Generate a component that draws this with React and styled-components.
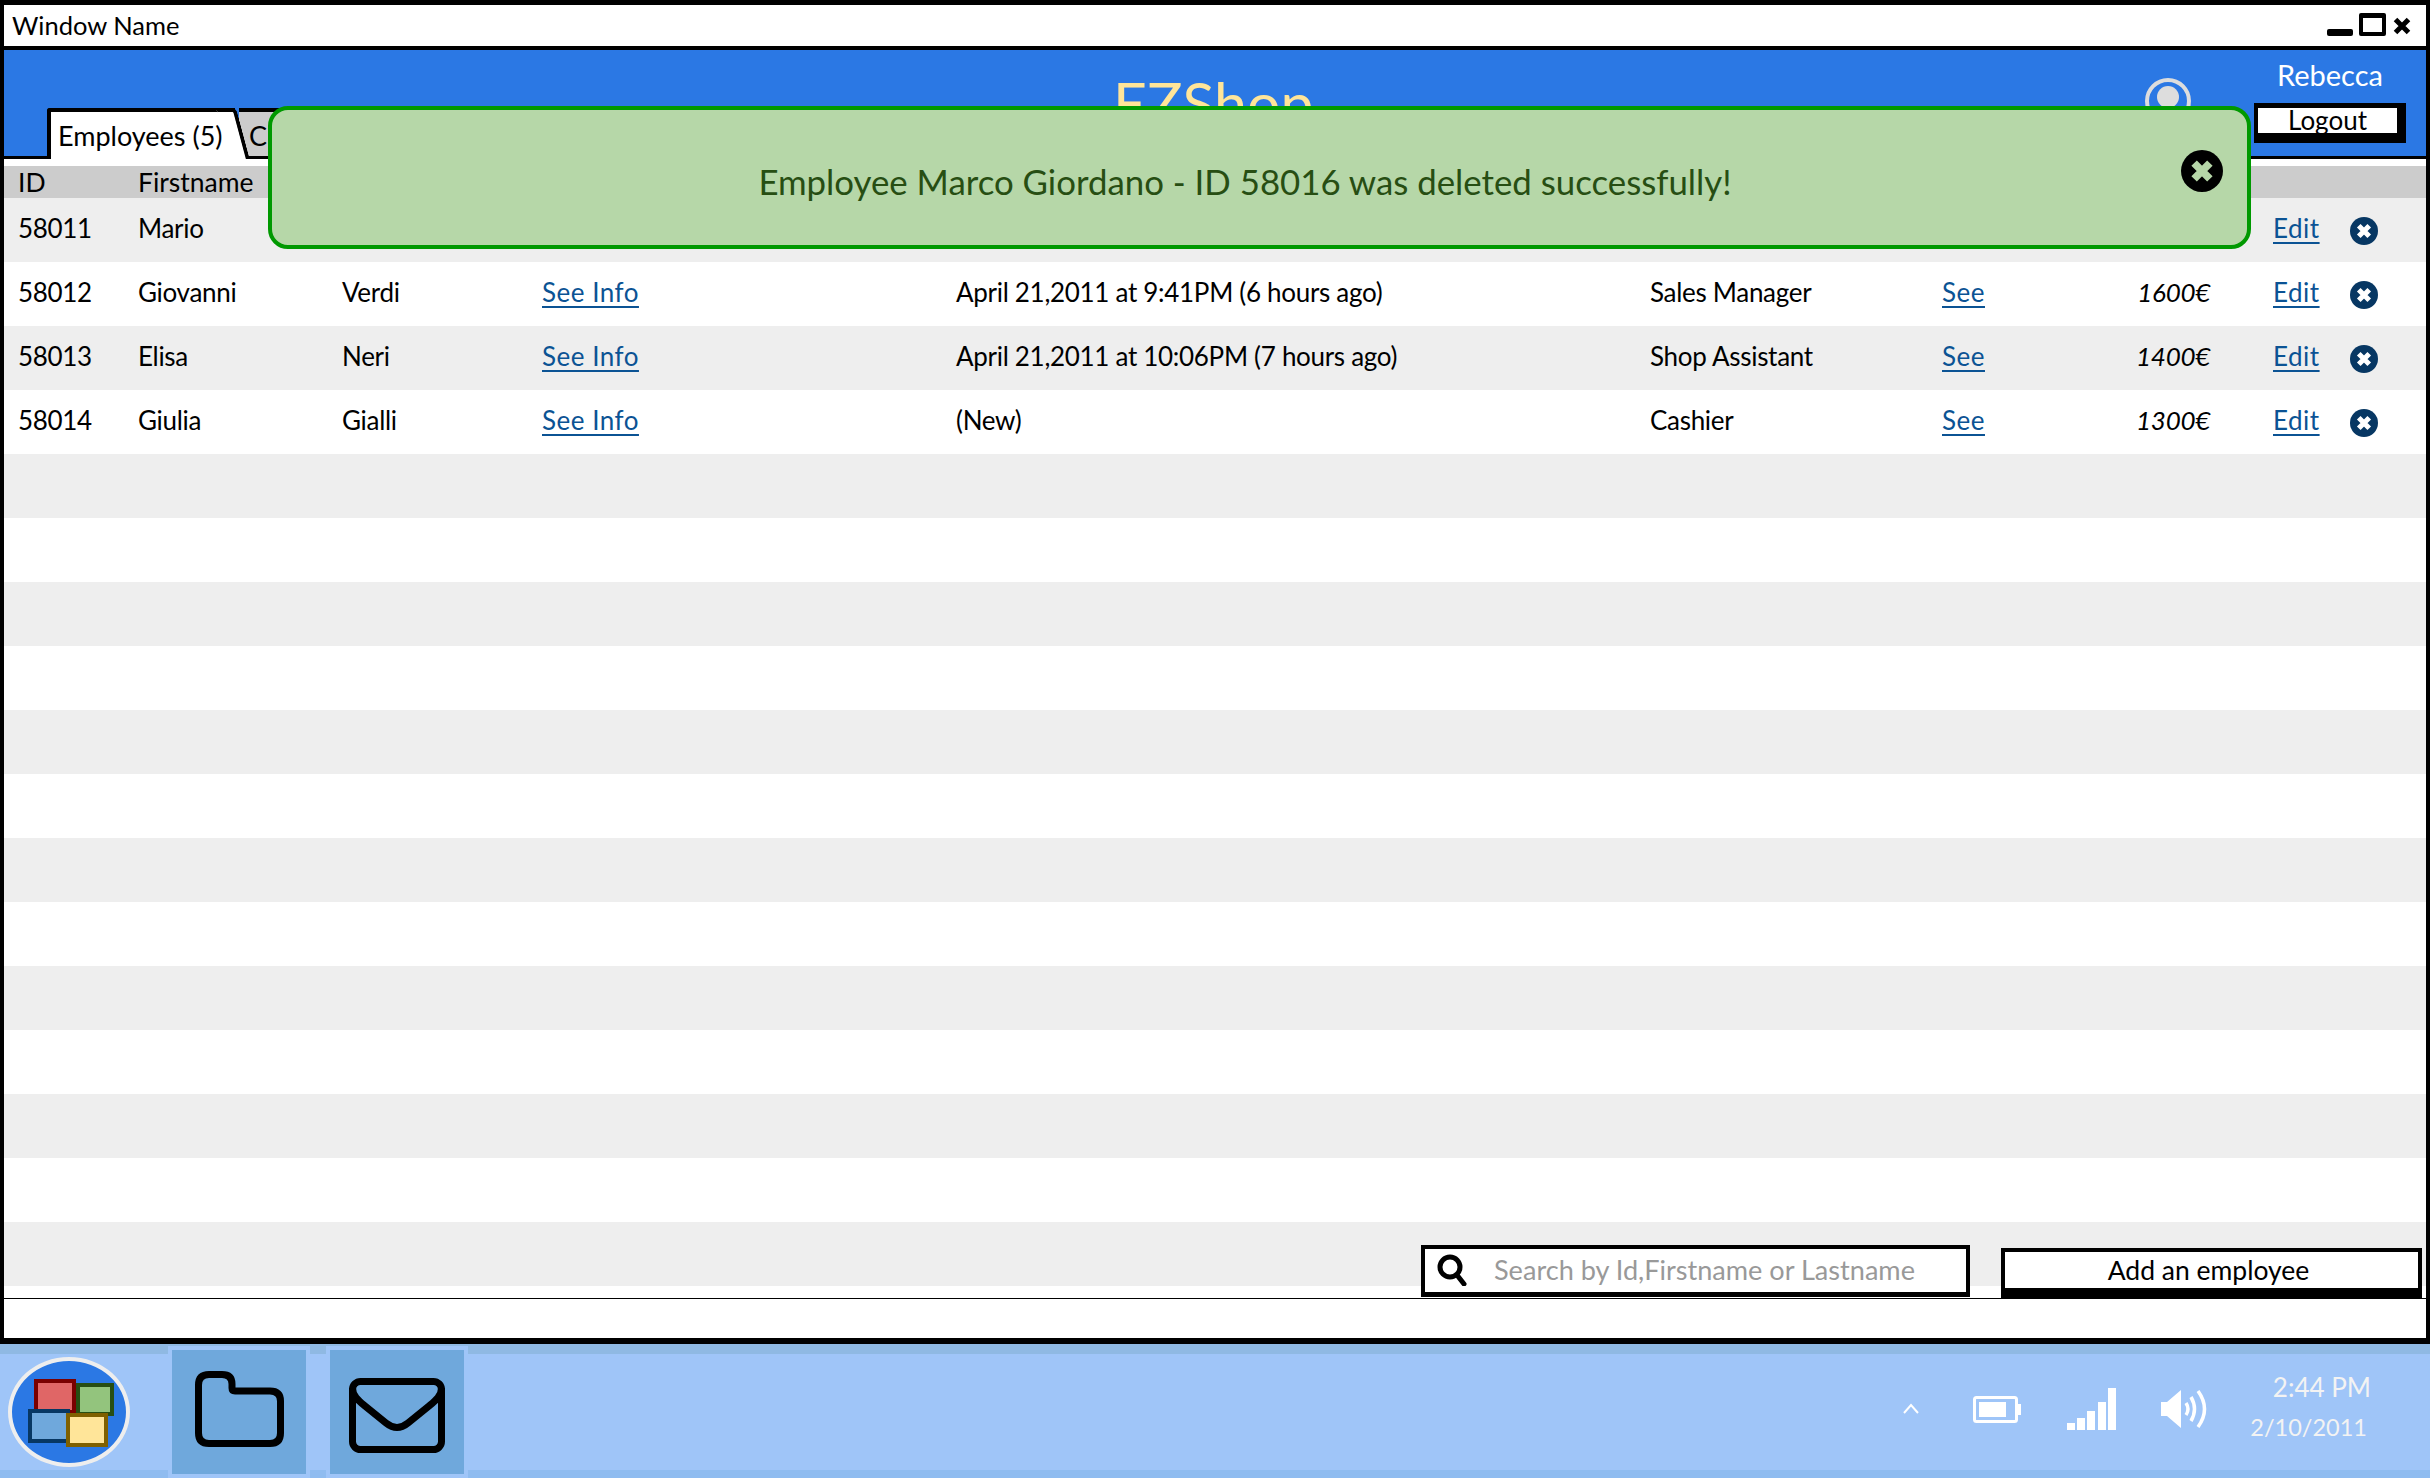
import styled, { createGlobalStyle } from "styled-components"

const GlobalStyle = createGlobalStyle`
    * {
        box-sizing: border-box;
    }
    html, body {
        margin: 0;
        padding: 0;
        background: #FFFFFF;
        font-family: "Lato", "Open Sans", sans-serif;
    }
`

const employees = [
    { id: "58011", first: "Mario", edit: true },
    { id: "58012", first: "Giovanni", last: "Verdi", info: true, login: "April 21,2011 at 9:41PM (6 hours ago)", role: "Sales Manager", salary: "1600€", edit: true },
    { id: "58013", first: "Elisa", last: "Neri", info: true, login: "April 21,2011 at 10:06PM (7 hours ago)", role: "Shop Assistant", salary: "1400€", edit: true },
    { id: "58014", first: "Giulia", last: "Gialli", info: true, login: "(New)", role: "Cashier", salary: "1300€", edit: true },
    ...Array.from({ length: 13 }, () => ({})),
]

function CloseCircle({ size, color, cross }) {
    return (
        <svg width={size} height={size} viewBox="0 0 24 24">
            <circle cx="12" cy="12" r="12" fill={color} />
            <path d="M7.5 7.5L16.5 16.5M16.5 7.5L7.5 16.5" stroke={cross} strokeWidth="4.4" />
        </svg>
    )
}

export default function App() {
    return (
        <Page>
            <GlobalStyle />
            <Window>
                <TitleBar>
                    <WindowName>Window Name</WindowName>
                    <WindowControls>
                        <MinimizeBtn />
                        <MaximizeBtn />
                        <svg width="18" height="18" viewBox="0 0 18 18">
                            <path d="M2.5 2.5L15.5 15.5M15.5 2.5L2.5 15.5" stroke="#000" strokeWidth="5" />
                        </svg>
                    </WindowControls>
                </TitleBar>

                <Header>
                    <Tabs>
                        <Tab>Employees (5)</Tab>
                        <TabBehind>C</TabBehind>
                    </Tabs>
                    <AppTitle>EZShop</AppTitle>
                    <Avatar>
                        <svg width="46" height="46" viewBox="0 0 46 46">
                            <circle cx="23" cy="23" r="21" fill="none" stroke="#DDDDDD" strokeWidth="4" />
                            <circle cx="23" cy="19" r="11" fill="#DDDDDD" />
                        </svg>
                    </Avatar>
                    <UserBlock>
                        <UserName>Rebecca</UserName>
                        <LogoutButton>Logout</LogoutButton>
                    </UserBlock>
                </Header>

                <Table>
                    <HeadRow>
                        <span>ID</span>
                        <span>Firstname</span>
                    </HeadRow>
                    {employees.map((emp, i) => (
                        <Row key={i} $alt={i % 2 === 0}>
                            <span>{emp.id}</span>
                            <span>{emp.first}</span>
                            <span>{emp.last}</span>
                            <span>{emp.info && <LinkText>See Info</LinkText>}</span>
                            <span>{emp.login}</span>
                            <span>{emp.role}</span>
                            <span>{emp.info && <LinkText>See</LinkText>}</span>
                            <Salary>{emp.salary}</Salary>
                            <EditCell>{emp.edit && <LinkText>Edit</LinkText>}</EditCell>
                            <DeleteCell>
                                {emp.edit && <CloseCircle size={28} color="#073763" cross="#FFFFFF" />}
                            </DeleteCell>
                        </Row>
                    ))}
                </Table>

                <StatusBar />

                <Alert>
                    <AlertText>Employee Marco Giordano - ID 58016 was deleted successfully!</AlertText>
                    <AlertClose>
                        <CloseCircle size={42} color="#000000" cross="#B6D7A8" />
                    </AlertClose>
                </Alert>

                <Actions>
                    <SearchBox>
                        <svg width="30" height="32" viewBox="0 0 30 32">
                            <circle cx="13" cy="13" r="10" fill="none" stroke="#000" strokeWidth="5" />
                            <path d="M20 21L27 30" stroke="#000" strokeWidth="5" strokeLinecap="round" />
                        </svg>
                        <SearchHint>Search by Id,Firstname or Lastname</SearchHint>
                    </SearchBox>
                    <AddButton>Add an employee</AddButton>
                </Actions>
            </Window>

            <Taskbar>
                <StartOrb>
                    <Pane $left={64} $top={22} $w={38} $h={33} $fill="#93C47D" $edge="#274E13" />
                    <Pane $left={22} $top={18} $w={42} $h={35} $fill="#E06666" $edge="#7A0000" />
                    <Pane $left={16} $top={48} $w={42} $h={34} $fill="#6FA8DC" $edge="#073763" />
                    <Pane $left={54} $top={52} $w={42} $h={34} $fill="#FFE599" $edge="#7F6000" />
                </StartOrb>
                <TaskTile $shift={-3}>
                    <svg width="89" height="76" viewBox="0 0 89 76">
                        <path
                            d="M3.5 14Q3.5 3.5 14 3.5H27Q37 3.5 37 13V17Q37 20 40 20H75Q85.5 20 85.5 30V62Q85.5 72.5 75 72.5H14Q3.5 72.5 3.5 62Z"
                            fill="none"
                            stroke="#000"
                            strokeWidth="7"
                        />
                    </svg>
                </TaskTile>
                <TaskTile $shift={3}>
                    <svg width="96" height="75" viewBox="0 0 96 75">
                        <rect x="3.5" y="3.5" width="89" height="68" rx="8" fill="none" stroke="#000" strokeWidth="7" />
                        <path
                            d="M3.5 10C3.5 18 10 23 16 28L37 45Q48 54 59 45L80 28C86 23 92.5 18 92.5 10"
                            fill="none"
                            stroke="#000"
                            strokeWidth="7"
                        />
                    </svg>
                </TaskTile>

                <Tray>
                    <svg width="18" height="12" viewBox="0 0 18 12">
                        <path d="M2 10L9 2L16 10" fill="none" stroke="#FFF" strokeWidth="2" />
                    </svg>
                    <svg width="49" height="27" viewBox="0 0 49 27">
                        <rect x="1.5" y="1.5" width="42" height="24" rx="2" fill="none" stroke="#FFF" strokeWidth="3" />
                        <rect x="6" y="6" width="27" height="15" fill="#FFF" />
                        <rect x="45" y="8" width="3" height="11" fill="#FFF" />
                    </svg>
                    <svg width="49" height="42" viewBox="0 0 49 42">
                        <rect x="0" y="35" width="8" height="7" fill="#FFF" />
                        <rect x="10" y="30" width="8" height="12" fill="#FFF" />
                        <rect x="20" y="23" width="8" height="19" fill="#FFF" />
                        <rect x="31" y="14" width="8" height="28" fill="#FFF" />
                        <rect x="41" y="0" width="8" height="42" fill="#FFF" />
                    </svg>
                    <svg width="47" height="38" viewBox="0 0 47 38">
                        <path d="M0 12H6L20 0V38L6 26H0Z" fill="#FFF" />
                        <path d="M25 13Q29 19 25 25M30 7Q37 19 30 31M37 1Q50 19 37 37" fill="none" stroke="#FFF" strokeWidth="3.5" />
                    </svg>
                    <Clock>
                        <TimeLine>2:44 PM</TimeLine>
                        <DateLine>2/10/2011</DateLine>
                    </Clock>
                </Tray>
            </Taskbar>
        </Page>
    )
}

const Page = styled.div`
    display: flex;
    flex-direction: column;
    width: 2430px;
    height: 1478px;
    overflow: hidden;
`
const Window = styled.div`
    position: relative;
    display: flex;
    flex-direction: column;
    height: 1344px;
    background: #FFFFFF;
    border-style: solid;
    border-color: #000000;
    border-width: 5px 4px 6px 4px;
`
const TitleBar = styled.div`
    display: flex;
    justify-content: space-between;
    align-items: center;
    height: 45px;
    padding: 0 15px 2px 8px;
    border-bottom: 4px solid #000000;
`
const WindowName = styled.span`
    font-size: 25.5px;
    color: #000000;
`
const WindowControls = styled.div`
    display: flex;
    align-items: flex-end;
    gap: 6px;
    svg {
        margin-left: 1px;
        margin-bottom: 1px;
    }
`
const MinimizeBtn = styled.div`
    width: 26px;
    height: 7px;
    background: #000000;
    border-radius: 2px;
`
const MaximizeBtn = styled.div`
    width: 27px;
    height: 23px;
    border: 4px solid #000000;
    border-top-width: 5px;
    border-radius: 2px;
`
const Header = styled.div`
    display: grid;
    grid-template-columns: 1066px 1032px 46px 1fr;
    height: 109px;
    padding-left: 43px;
    background: #2B78E4;
    border-bottom: 3px solid #000000;
`
const Tabs = styled.div`
    display: flex;
    align-self: end;
    width: 280px;
    height: 51px;
    margin-bottom: -3px;
`
const Tab = styled.div`
    position: relative;
    z-index: 1;
    width: 188px;
    padding: 7px 0 0 7px;
    font-size: 27px;
    white-space: nowrap;
    color: #000000;
    background: #FFFFFF;
    border-top: 4px solid #000000;
    border-left: 4px solid #000000;
    border-top-left-radius: 3px;
    &::after {
        content: "";
        position: absolute;
        z-index: -1;
        top: -4px;
        right: -8px;
        bottom: 0;
        width: 16px;
        background: #FFFFFF;
        border-top: 4px solid #000000;
        border-right: 4px solid #000000;
        border-top-right-radius: 5px;
        transform: skewX(15deg);
    }
`
const TabBehind = styled.div`
    width: 80px;
    margin-left: 4px;
    padding: 7px 0 0 10px;
    font-size: 27px;
    color: #000000;
    background: #CCCCCC;
    border-top: 4px solid #000000;
    border-bottom: 3px solid #000000;
`
const AppTitle = styled.div`
    padding-top: 21px;
    font-size: 59px;
    line-height: 64px;
    color: #FFE599;
`
const Avatar = styled.div`
    padding-top: 28px;
    line-height: 0;
`
const UserBlock = styled.div`
    display: flex;
    flex-direction: column;
    align-items: center;
    width: 152px;
    margin-left: 63px;
    padding-top: 10px;
`
const UserName = styled.div`
    margin-bottom: 13px;
    font-size: 29px;
    line-height: 30px;
    color: #FFFFFF;
`
const LogoutButton = styled.div`
    width: 100%;
    height: 40px;
    text-align: center;
    font-size: 26px;
    line-height: 24px;
    color: #000000;
    background: #FFFFFF;
    border-style: solid;
    border-color: #000000;
    border-width: 5px 9px 10px 4px;
`
const Table = styled.div`
    flex: 1;
    display: flex;
    flex-direction: column;
    padding-top: 7px;
`
const HeadRow = styled.div`
    display: grid;
    grid-template-columns: 120px 1fr;
    align-items: center;
    height: 32px;
    padding: 0 0 4px 14px;
    font-size: 26.5px;
    color: #000000;
    background: #CCCCCC;
`
const Row = styled.div`
    display: grid;
    grid-template-columns: 120px 204px 200px 414px 694px 292px 130px 138px 140px 1fr;
    align-items: center;
    height: 64px;
    padding: 0 0 4px 14px;
    font-size: 26px;
    letter-spacing: -0.3px;
    white-space: nowrap;
    color: #000000;
    background: ${(props) => (props.$alt ? "#EEEEEE" : "#FFFFFF")};
`
const LinkText = styled.span`
    color: #0B5394;
    text-decoration: underline;
    text-underline-offset: 4px;
    text-decoration-thickness: 2px;
    letter-spacing: 0.5px;
`
const Salary = styled.span`
    font-style: italic;
    text-align: right;
`
const EditCell = styled.span`
    padding-left: 63px;
`
const DeleteCell = styled.span`
    display: flex;
    align-items: center;
    padding-top: 6px;
`
const StatusBar = styled.div`
    height: 40px;
    background: #FFFFFF;
    border-top: 1px solid #000000;
    margin-top: 12px;
`
const Alert = styled.div`
    position: absolute;
    top: 101px;
    left: 264px;
    display: flex;
    align-items: center;
    justify-content: center;
    width: 1983px;
    height: 143px;
    padding: 8px 29px 0 0;
    background: #B6D7A8;
    border: 4px solid #009900;
    border-radius: 20px;
`
const AlertText = styled.span`
    font-size: 34.8px;
    color: #274E13;
`
const AlertClose = styled.div`
    position: absolute;
    top: 40px;
    right: 24px;
    line-height: 0;
`
const Actions = styled.div`
    position: absolute;
    right: 4px;
    bottom: 40px;
    display: flex;
    align-items: flex-end;
    gap: 31px;
`
const SearchBox = styled.div`
    display: flex;
    align-items: center;
    gap: 27px;
    width: 549px;
    height: 52px;
    margin-bottom: 1px;
    padding: 0 0 2px 12px;
    background: #FFFFFF;
    border: 4px solid #000000;
    border-bottom-width: 5px;
`
const SearchHint = styled.span`
    font-size: 27.1px;
    color: #999999;
`
const AddButton = styled.div`
    width: 421px;
    height: 50px;
    padding-right: 6px;
    text-align: center;
    font-size: 26.5px;
    line-height: 36px;
    color: #000000;
    background: #FFFFFF;
    border-style: solid;
    border-color: #000000;
    border-width: 4px 4px 10px 4px;
`
const Taskbar = styled.div`
    display: flex;
    flex: 1;
    align-items: stretch;
    padding: 2px 0 0 8px;
    background: linear-gradient(#8FB9E3 10px, #9FC5F8 10px, #9FC5F8 126px, #8FBCF0 126px);
`
const StartOrb = styled.div`
    position: relative;
    align-self: center;
    width: 122px;
    height: 110px;
    margin-right: 38px;
    background: #2B78E4;
    border: 4px solid #EEEEEE;
    border-radius: 50%;
`
const Pane = styled.div`
    position: absolute;
    left: ${(props) => props.$left}px;
    top: ${(props) => props.$top}px;
    width: ${(props) => props.$w}px;
    height: ${(props) => props.$h}px;
    background: ${(props) => props.$fill};
    border: 4px solid ${(props) => props.$edge};
`
const TaskTile = styled.div`
    display: flex;
    align-items: center;
    justify-content: center;
    width: 142px;
    margin-right: 16px;
    background: #6FA8DC;
    border: 4px solid #9FC5F8;
    svg {
        transform: translateY(${(props) => props.$shift}px);
    }
`
const Tray = styled.div`
    display: flex;
    align-items: center;
    gap: 45px;
    margin-left: auto;
    padding: 0 59px 6px 0;
    > svg:first-child {
        margin-right: 8px;
    }
`
const Clock = styled.div`
    display: flex;
    flex-direction: column;
    align-items: flex-end;
    gap: 10px;
    margin-left: -3px;
    padding-bottom: 5px;
`
const TimeLine = styled.span`
    font-size: 26px;
    line-height: 30px;
    color: #F3F3F3;
`
const DateLine = styled.span`
    margin-right: 4px;
    font-size: 23.5px;
    line-height: 30px;
    color: #F3F3F3;
`
